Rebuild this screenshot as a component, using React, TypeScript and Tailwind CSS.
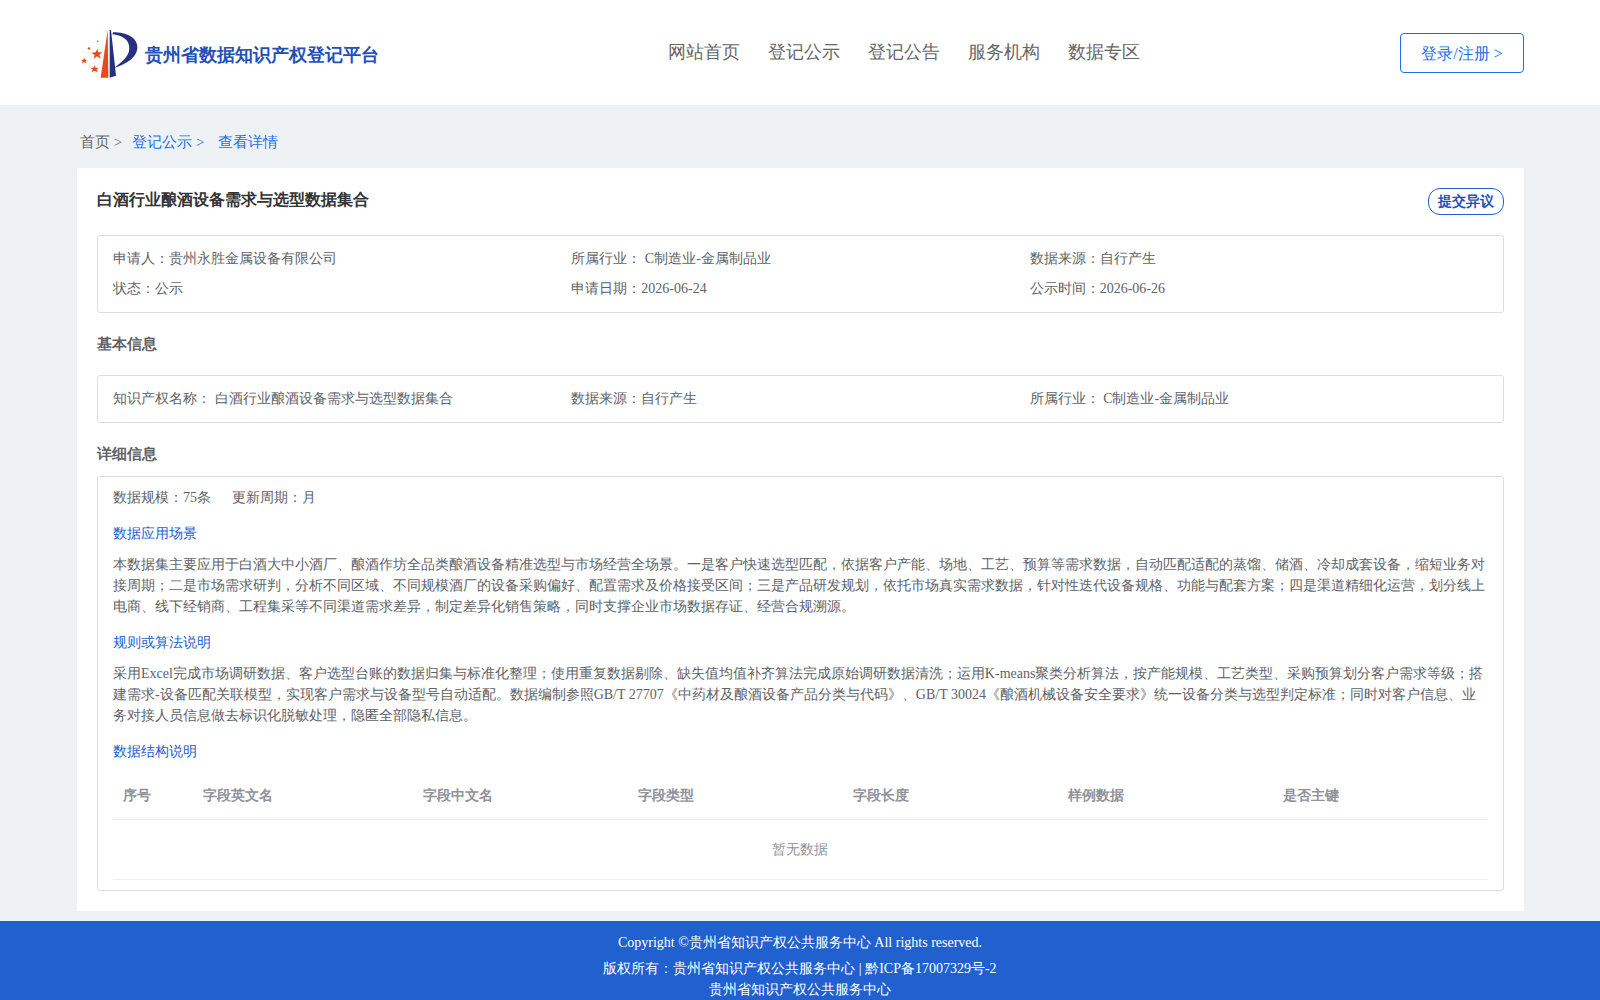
const META = [
  ["申请人：贵州永胜金属设备有限公司", "所属行业： C制造业-金属制品业", "数据来源：自行产生"],
  ["状态：公示", "申请日期：2026-06-24", "公示时间：2026-06-26"],
];
const COLS = ["序号", "字段英文名", "字段中文名", "字段类型", "字段长度", "样例数据", "是否主键"];
const NAV = ["网站首页", "登记公示", "登记公告", "服务机构", "数据专区"];

function Logo() {
  return (
    <svg width="58" height="50" viewBox="30 40 174 150" className="shrink-0">
      <path d="M113 43 L115 186 L92 186 Z" fill="#e8481c" />
      <path d="M119 43 L123 43 L138 180 L119 186 Z" fill="#27307f" />
      <path d="M129 50 C170 50 204 66 202 98 C200 128 165 146 133 157 C155 138 178 124 178 97 C178 72 155 58 127 56 Z" fill="#27307f" />
      <g fill="#e8481c">
        <path d="M82 99 L85 110 L97 110 L88 117 L92 129 L81 122 L71 130 L74 118 L64 111 L77 110 Z" />
        <path d="M43 126 L45 132 L52 132 L47 136 L49 143 L42 139 L36 144 L38 137 L33 133 L40 132 Z" />
        <path d="M74 149 L77 156 L86 156 L80 161 L83 170 L73 165 L65 170 L68 161 L61 157 L70 156 Z" />
        <circle cx="57" cy="98" r="3.5" />
        <circle cx="83" cy="77" r="2.5" />
      </g>
    </svg>
  );
}

function Section({ children }: { children: React.ReactNode }) {
  return <div className="text-[14px] leading-[21px] text-[#2060cf]">{children}</div>;
}

function Para({ children }: { children: React.ReactNode }) {
  return <p className="mt-[10px] text-[14px] leading-[21px] text-[#606266]">{children}</p>;
}

export default function App() {
  return (
    <div className="flex h-[1000px] flex-col overflow-hidden bg-[#eff2f5] font-['Liberation_Serif',serif] text-[14px] text-[#606266] [text-spacing-trim:space-all]">
      <header className="flex h-[105px] shrink-0 items-center bg-white pl-[80px] pr-[76px]">
        <div className="mt-[2px] flex w-[588px] items-center gap-[7px]">
          <Logo />
          <span className="mt-[4px] text-[18px] font-bold text-[#2350b8]">贵州省数据知识产权登记平台</span>
        </div>
        <nav className="flex gap-[28px] text-[18px] text-[#666666]">
          {NAV.map((n) => (
            <span key={n}>{n}</span>
          ))}
        </nav>
        <button className="ml-auto h-[40px] w-[124px] rounded-[4px] border border-[#1a6fe8] bg-white pt-[2px] text-[16px] text-[#1a6fe8]">
          登录/注册 &gt;
        </button>
      </header>

      <div className="flex h-[63px] shrink-0 items-center gap-[10px] pl-[80px] pt-[11px] text-[15px]">
        <span className="text-[#666666]">首页 &gt;</span>
        <span className="text-[#1a6fe8]">登记公示 &gt;</span>
        <span className="ml-[4px] text-[#1a6fe8]">查看详情</span>
      </div>

      <main className="mx-[76px] ml-[77px] h-[743px] shrink-0 bg-white px-[20px] pt-[20px]">
        <div className="flex h-[27px] items-start justify-between">
          <h1 className="text-[16px] leading-[24px] font-bold text-[#333333]">白酒行业酿酒设备需求与选型数据集合</h1>
          <button className="h-[27px] w-[76px] rounded-[12px] border border-[#2060cf] bg-white text-[14px] font-bold text-[#2350b8]">
            提交异议
          </button>
        </div>

        <div className="mt-[20px] h-[78px] rounded-[3px] border border-[#dddddd] px-[15px] pt-[7px]">
          {META.map((row, i) => (
            <div key={i} className="grid h-[30px] grid-cols-3 items-center">
              {row.map((c) => (
                <span key={c}>{c}</span>
              ))}
            </div>
          ))}
        </div>

        <h2 className="mt-[21px] text-[15px] leading-[20px] font-bold text-[#606266]">基本信息</h2>

        <div className="mt-[21px] grid h-[48px] grid-cols-3 items-center rounded-[3px] border border-[#dddddd] px-[15px] pb-[2px]">
          <span>知识产权名称： 白酒行业酿酒设备需求与选型数据集合</span>
          <span>数据来源：自行产生</span>
          <span>所属行业： C制造业-金属制品业</span>
        </div>

        <h2 className="mt-[21px] text-[15px] leading-[20px] font-bold text-[#606266]">详细信息</h2>

        <div className="mt-[12px] h-[415px] rounded-[3px] border border-[#dddddd] px-[15px] pt-[10px]">
          <div className="mb-[15px] flex gap-[21px] leading-[21px]">
            <span>数据规模：75条</span>
            <span>更新周期：月</span>
          </div>
          <Section>数据应用场景</Section>
          <Para>
            本数据集主要应用于白酒大中小酒厂、酿酒作坊全品类酿酒设备精准选型与市场经营全场景。一是客户快速选型匹配，依据客户产能、场地、工艺、预算等需求数据，自动匹配适配的蒸馏、储酒、冷却成套设备，缩短业务对接周期；二是市场需求研判，分析不同区域、不同规模酒厂的设备采购偏好、配置需求及价格接受区间；三是产品研发规划，依托市场真实需求数据，针对性迭代设备规格、功能与配套方案；四是渠道精细化运营，划分线上电商、线下经销商、工程集采等不同渠道需求差异，制定差异化销售策略，同时支撑企业市场数据存证、经营合规溯源。
          </Para>
          <div className="mt-[15px]">
            <Section>规则或算法说明</Section>
          </div>
          <Para>
            采用Excel完成市场调研数据、客户选型台账的数据归集与标准化整理；使用重复数据剔除、缺失值均值补齐算法完成原始调研数据清洗；运用K-means聚类分析算法，按产能规模、工艺类型、采购预算划分客户需求等级；搭建需求-设备匹配关联模型，实现客户需求与设备型号自动适配。数据编制参照GB/T 27707《中药材及酿酒设备产品分类与代码》、GB/T 30024《酿酒机械设备安全要求》统一设备分类与选型判定标准；同时对客户信息、业务对接人员信息做去标识化脱敏处理，隐匿全部隐私信息。
          </Para>
          <div className="mt-[15px]">
            <Section>数据结构说明</Section>
          </div>

          <div className="mt-[10px] grid h-[48px] grid-cols-[80px_220px_repeat(5,215px)] items-center border-b border-[#ebeef5] font-bold text-[#909399]">
            {COLS.map((c) => (
              <span key={c} className="pl-[10px]">{c}</span>
            ))}
          </div>
          <div className="flex h-[60px] items-center justify-center border-b border-[#ebeef5] pr-[2px] text-[#909399]">暂无数据</div>
        </div>
      </main>

      <footer className="mt-[10px] grow bg-[#2060cf] pt-[11px] text-center text-[14px] text-white">
        <div className="leading-[21px]">Copyright ©贵州省知识产权公共服务中心 All rights reserved.</div>
        <div className="mt-[5px] leading-[21px]">版权所有：贵州省知识产权公共服务中心 | 黔ICP备17007329号-2</div>
        <div className="leading-[21px]">贵州省知识产权公共服务中心</div>
      </footer>
    </div>
  );
}
